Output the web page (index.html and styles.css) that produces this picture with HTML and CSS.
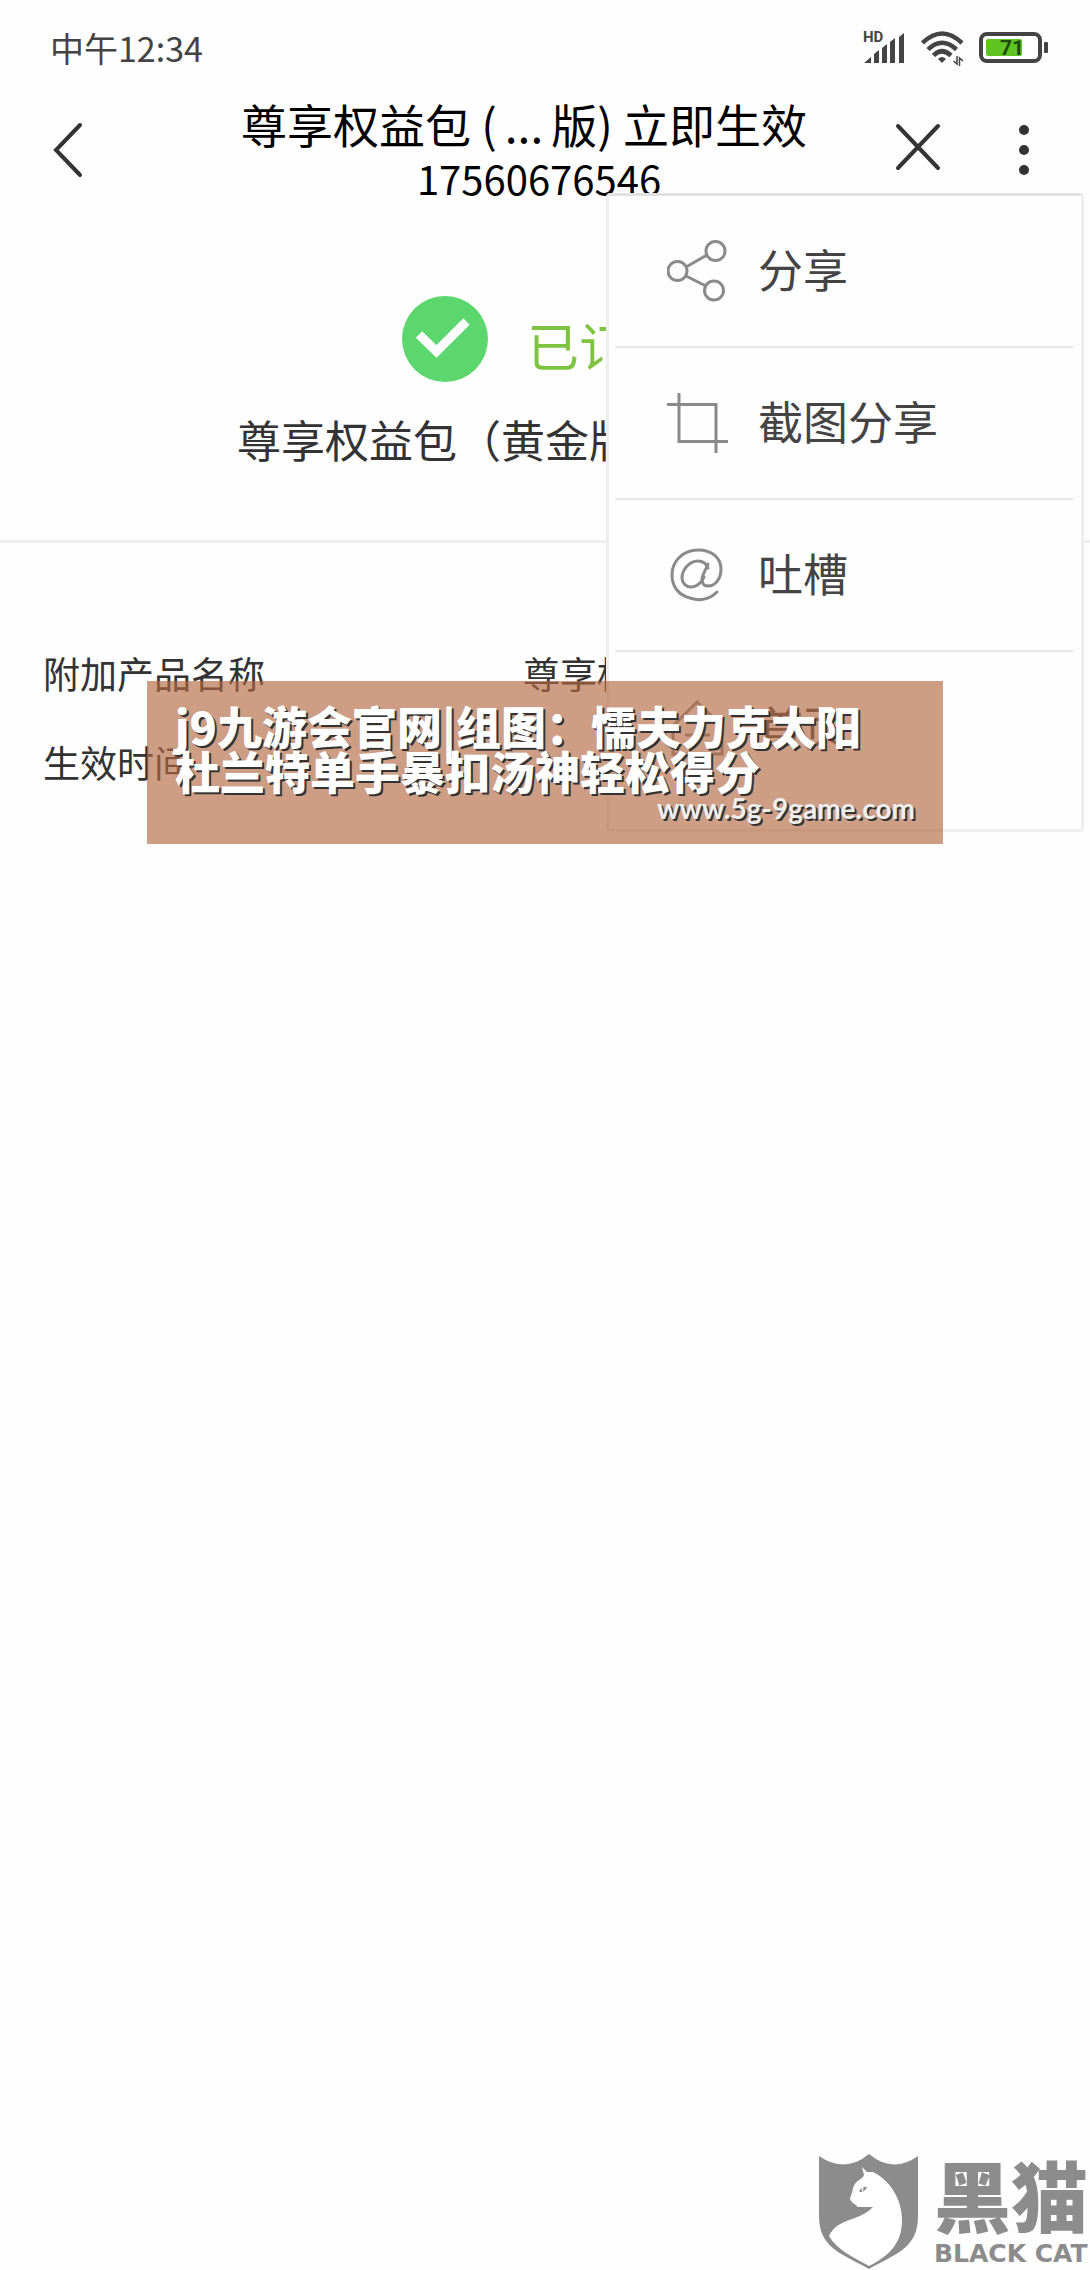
FILE: index.html
```html
<!DOCTYPE html>
<html lang="zh-CN">
<head>
    <meta charset="UTF-8">
    <meta name="viewport" content="width=device-width, initial-scale=1.0">
    <title>尊享权益包</title>
    <link rel="stylesheet" href="styles.css">
</head>
<body>
    <div class="status-bar">
        <span class="time">中午12:34</span>
        <div class="status-icons">
            <!-- 信号 -->
            <svg class="signal" width="44" height="44" viewBox="0 -4 44 44" aria-hidden="true">
                <text x="0" y="12" class="hd">HD</text>
                <path d="M1 33 L8 27 V33 Z M11 24 L16 20 V33 H11 Z M19 18 L24 14 V33 H19 Z M27 12 L32 8 V33 H27 Z M36 7 L41 3 V33 H36 Z" fill="#444"/>
            </svg>
            <!-- WiFi -->
            <svg class="wifi" width="44" height="40" viewBox="0 0 44 40" aria-hidden="true">
                <g fill="none" stroke="#444" stroke-width="4.500">
                    <path d="M1.500 15 Q21 -4 41 15"/>
                    <path d="M7 21.500 Q21 8 35.500 21.500"/>
                    <path d="M12.500 27.500 Q21 19 30 27.500"/>
                </g>
                <path d="M17 31 Q21 27 25 31 L21 35 Z" fill="#444"/>
                <path d="M32.500 33 L36 36 V28 M38.500 38 V30 L42 33" fill="none" stroke="#444" stroke-width="1.500"/>
            </svg>
            <!-- 电量 -->
            <svg class="battery" width="70" height="32" viewBox="0 0 70 32" aria-hidden="true">
                <rect x="2" y="2" width="59" height="27" rx="6" fill="#fff" stroke="#444" stroke-width="4"/>
                <rect x="7" y="7" width="36" height="17" rx="2" fill="#5fc524"/>
                <rect x="65" y="10" width="4" height="11" rx="1" fill="#444"/>
                <text x="21" y="23" class="level">71</text>
            </svg>
        </div>
    </div>

    <header class="nav-bar">
        <button class="icon-btn back" aria-label="返回">
            <svg width="32" height="56" viewBox="0 0 32 56"><path d="M28 3 L4 28 L28 53" fill="none" stroke="#333" stroke-width="4" stroke-linecap="round"/></svg>
        </button>
        <div class="nav-title">
            <h1>尊享权益包 (<span class="dots">...</span>版) 立即生效</h1>
            <p>17560676546</p>
        </div>
        <button class="icon-btn close" aria-label="关闭">
            <svg width="48" height="54" viewBox="0 0 48 54"><path d="M4 3 L44 45 M44 3 L4 45" fill="none" stroke="#333" stroke-width="4" stroke-linecap="round"/></svg>
        </button>
        <button class="icon-btn more" aria-label="更多">
            <svg width="16" height="52" viewBox="0 0 16 52"><g fill="#333"><circle cx="8" cy="6" r="5"/><circle cx="8" cy="26" r="5"/><circle cx="8" cy="46" r="5"/></g></svg>
        </button>

        <!-- 右上角菜单 -->
        <nav class="menu">
            <button class="menu-item">
                <svg width="62" height="62" viewBox="0 0 62 62"><g fill="none" stroke="#8a8a8a" stroke-width="3"><circle cx="10.500" cy="31" r="9.500"/><circle cx="48.500" cy="11" r="9.500"/><circle cx="47" cy="50.500" r="9.500"/><path d="M19 27 L40 15 M19 36 L39 46"/></g></svg>
                <span>分享</span>
            </button>
            <button class="menu-item">
                <svg width="62" height="62" viewBox="0 0 62 62"><path d="M0 12.500 H49 V61 M12 1 V49.500 H61" fill="none" stroke="#8a8a8a" stroke-width="3"/></svg>
                <span>截图分享</span>
            </button>
            <button class="menu-item">
                <svg width="62" height="62" viewBox="0 0 62 62"><g fill="none" stroke="#8a8a8a" stroke-width="3" stroke-linecap="round"><path d="M50 48 C42 56 32 57 23 54 C11 51 5 42 5 31 C5 17 16 6 31 6 C45 6 54 14 54 25 C54 34 49 42 41 42 C35 42 34 37 36 31 L41 20"/><path d="M41 24 C39 19 35 17 31 17 C22 17 15 26 15 34 C15 39 19 43 24 43 C30 43 35 38 37 33"/></g></svg>
                <span>吐槽</span>
            </button>
            <button class="menu-item">
                <svg width="62" height="62" viewBox="0 0 62 62"><path d="M6 29 L30 5 L55 29 V57 H6 Z M18 38 H43" fill="none" stroke="#8a8a8a" stroke-width="3"/></svg>
                <span>首页</span>
            </button>
        </nav>
    </header>

    <main>
        <section class="result">
            <div class="result-state">
                <svg width="88" height="88" viewBox="0 0 88 88" aria-hidden="true"><circle cx="44" cy="44" r="43" fill="#5bd76d"/><path d="M18 39.500 L35.500 56.500 L65.500 26.500" fill="none" stroke="#fff" stroke-width="9"/></svg>
                <strong>已订购</strong>
            </div>
            <p class="result-name">尊享权益包（黄金版）立即生效</p>
        </section>

        <dl class="details">
            <dt>附加产品名称</dt>
            <dd>尊享权益包</dd>
            <dt>生效时间</dt>
            <dd></dd>
        </dl>
    </main>

    <aside class="banner">
        <p class="banner-title">j9九游会官网|组图：懦夫力克太阳<br>杜兰特单手暴扣汤神轻松得分</p>
        <p class="banner-url">www.5g-9game.com</p>
    </aside>

    <footer class="brand">
        <svg width="100" height="116" viewBox="0 0 100 116" aria-hidden="true">
            <path d="M0 2 Q26 20 50 0 Q74 20 99 2 V62 C99 94 78 99 50 115 C22 99 0 94 0 62 Z" fill="#8c8c8c"/>
            <path d="M43 13 L48 18 L54 18 C72 27 83 46 83 66 C83 88 72 101 50 112 C34 103 18 96 10 82 C19 63 40 68 54 53 L39 53 C35 49 31 48 31 44 C34 38 33 34 36 30 C38 26 44 25 45 21 Z" fill="#fff"/>
            <path d="M40 37 Q44 32 48 33 Q46 38 41 38 Z" fill="#8c8c8c"/>
            <path d="M43.500 33 V37" stroke="#fff" stroke-width="1.500"/>
        </svg>
        <div class="brand-text">
            <span class="brand-cn">黑猫</span>
            <span class="brand-en">BLACK CAT</span>
        </div>
    </footer>
</body>
</html>
```

FILE: styles.css
```css
* {
    box-sizing: border-box;
}
body {
    margin: 0;
    min-height: 100vh;
    display: flex;
    flex-direction: column;
    position: relative;
    background: #fefefe;
    color: #333;
    font-family: "Noto Sans CJK SC", sans-serif;
}
h1, p, dl, dd {
    margin: 0;
    font-weight: normal;
}
button {
    border: none;
    padding: 0;
    background: none;
    font: inherit;
    color: inherit;
    cursor: pointer;
}
svg {
    display: block;
    flex: none;
}

/* 状态栏 */
.status-bar {
    display: flex;
    justify-content: space-between;
    align-items: center;
    height: 96px;
    padding: 0 41px 0 50px;
    color: #444;
}
.time {
    font-size: 34px;
    line-height: 48px;
}
.status-icons {
    display: flex;
    align-items: center;
    gap: 14px;
}
.hd {
    font: bold 15px Roboto, sans-serif;
    fill: #444;
}
.level {
    font: bold 21px Roboto, sans-serif;
    fill: #1f4a10;
}

/* 导航栏 */
.nav-bar {
    position: relative;
    display: flex;
    align-items: center;
    height: 108px;
    padding: 0 58px 0 52px;
    color: #000;
}
.nav-title {
    flex: 1;
    padding-left: 70px;
    text-align: center;
    white-space: nowrap;
}
.nav-title h1 {
    font-size: 46px;
    line-height: 56px;
}
.nav-title p {
    padding-left: 30px;
    font-size: 40px;
    line-height: 54px;
}
.dots {
    padding: 0 8px;
}
.close {
    margin-right: 74px;
}

/* 菜单 */
.menu {
    position: absolute;
    top: 97px;
    right: 6px;
    z-index: 1;
    width: 478px;
    padding: 0 8px 25px 6px;
    border: 3px solid #eee;
    border-top-color: #e2e2e2;
    border-radius: 4px;
    background: #fefefe;
    color: #444;
}
.menu-item {
    display: flex;
    align-items: center;
    gap: 29px;
    width: 100%;
    height: 152px;
    padding-left: 52px;
    border-bottom: 2px solid #e8e8e8;
    font-size: 45px;
}
.menu-item span {
    padding-bottom: 5px;
}
.menu-item:last-child {
    border-bottom: none;
}

/* 订购结果 */
.result {
    padding: 91px 0 71px;
    border-bottom: 3px solid #eee;
    text-align: center;
}
.result-state {
    display: flex;
    justify-content: center;
    align-items: flex-end;
    gap: 38px;
    padding-right: 6px;
}
.result-state strong {
    color: #7fc441;
    font-size: 52px;
    font-weight: normal;
    line-height: 76px;
}
.result-name {
    margin-top: 26px;
    font-size: 44px;
    line-height: 60px;
}
.details {
    display: grid;
    grid-template-columns: 480px 1fr;
    padding: 86px 43px;
    font-size: 37px;
    line-height: 89px;
}

/* 横幅 */
.banner {
    position: absolute;
    top: 681px;
    left: 147px;
    right: 147px;
    z-index: 2;
    padding: 22px 28px 20px;
    background: rgba(178, 104, 66, 0.65);
    color: #fff;
    text-shadow: 2px 2px 0 #333;
}
.banner-title {
    font-size: 45px;
    font-weight: 900;
    line-height: 45px;
}
.banner-url {
    color: #eee;
    font: bold 28px/31px Lato, sans-serif;
    text-align: right;
}

/* 水印 */
.brand {
    display: flex;
    gap: 15px;
    justify-content: flex-end;
    align-items: flex-end;
    margin-top: auto;
    padding-right: 2px;
    color: #8c8c8c;
}
.brand-text {
    display: flex;
    flex-direction: column;
}
.brand-cn {
    margin-bottom: 6px;
    font-size: 77px;
    font-weight: 900;
    line-height: 77px;
}
.brand-en {
    font: bold 25px/32px "DejaVu Sans", sans-serif;
}
```
